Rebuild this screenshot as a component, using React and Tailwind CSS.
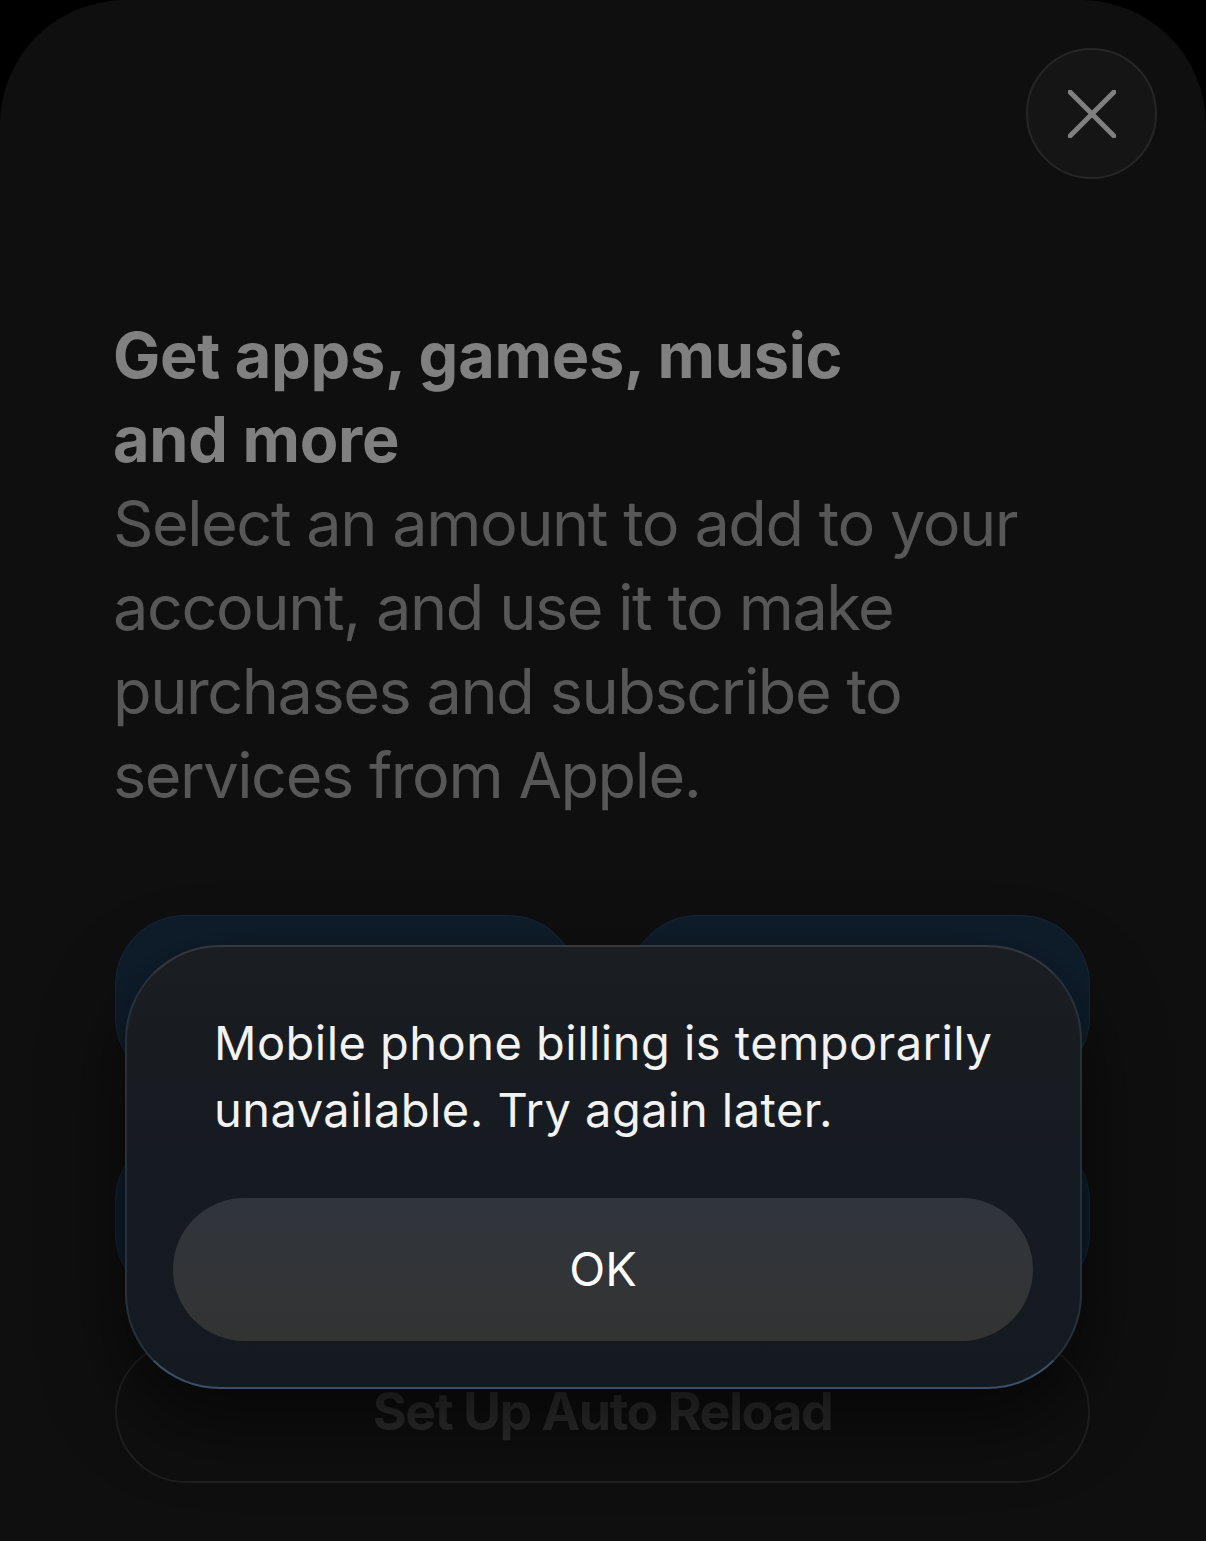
import { X } from 'lucide-react';

const FONT = { fontFamily: 'Inter, "Noto Sans", "Liberation Sans", sans-serif' };

function AmountCard() {
    return <div className="h-[172px] rounded-[70px] bg-[#0f1d2b] border border-[#16283a]" />;
}

export default function App() {
    return (
        <div className="min-h-screen bg-black" style={FONT}>
            <div className="h-[1541px] bg-[#0f0f0f] rounded-t-[125px] overflow-hidden">
                {/* Close */}
                <div className="flex justify-end pt-[48px] pr-[49px]">
                    <button className="w-[131px] h-[131px] rounded-full bg-[#151515] border-2 border-[#262626] flex items-center justify-center text-[#808080]">
                        <svg width="48" height="48" viewBox="0 0 48 48" fill="none" stroke="currentColor" strokeWidth="5" strokeLinecap="round">
                            <path d="M2 2 L46 46 M46 2 L2 46" />
                        </svg>
                    </button>
                </div>

                <main className="pl-[113px] pr-[116px]">
                    {/* Copy */}
                    <div className="mt-[134px] text-[63px] leading-[84px]">
                        <h1 className="font-bold text-[#808080] tracking-[-0.004em]">
                            Get apps, games, music<br />and more
                        </h1>
                        <p className="text-[#575757] tracking-[-0.023em]">
                            Select an amount to add to your account, and use it to make purchases and subscribe to services from Apple.
                        </p>
                    </div>

                    {/* Amounts + alert */}
                    <div className="relative mt-[98px] ml-[2px]">
                        <div className="grid grid-cols-2 gap-x-[50px] gap-y-[44px]">
                            <AmountCard />
                            <AmountCard />
                            <AmountCard />
                            <AmountCard />
                        </div>
                        <button className="mt-[37px] w-full h-[143px] rounded-[72px] border-2 border-[#1f1f1f] text-[52px] font-bold text-[#2d2d2d] tracking-[-0.03em]">
                            Set Up Auto Reload
                        </button>

                        {/* Alert */}
                        <div className="absolute top-[30px] left-[10px] right-[8px] rounded-[95px] border-2 border-[#27313c] border-t-[#34383d] border-b-[#3a5068] bg-gradient-to-b from-[#1a1d21] via-[#161b21] to-[#151a20] px-[46px] pr-[47px] pt-[62px] pb-[46px] shadow-[0_30px_80px_rgba(0,0,0,0.6)]">
                            <p className="pl-[41px] pr-[30px] text-[47px] leading-[67px] text-[#f2f2f2] tracking-[0.01em]">
                                Mobile phone billing is temporarily unavailable. Try again later.
                            </p>
                            <button className="mt-[55px] w-full h-[143px] rounded-[72px] bg-gradient-to-b from-[#30353c] to-[#333333] text-[47px] text-white">
                                OK
                            </button>
                        </div>
                    </div>
                </main>
            </div>
        </div>
    );
}
